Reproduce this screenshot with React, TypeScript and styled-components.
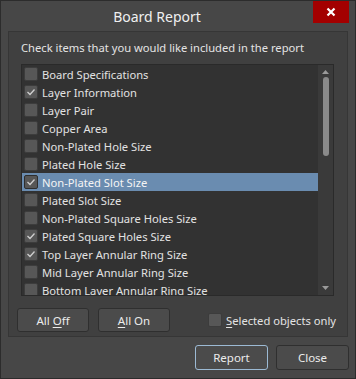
import React from 'react'
import styled, {createGlobalStyle} from 'styled-components'

const GlobalStyle = createGlobalStyle`
  html, body {
    margin: 0;
    padding: 0;
    background: #474747;
  }
  * {
    box-sizing: border-box;
  }
`

const Window = styled.div`
  width: 356px;
  height: 379px;
  display: flex;
  flex-direction: column;
  background: #474747;
  border: 1px solid #2c2c2c;
  font-family: 'Noto Sans', 'Open Sans', sans-serif;
  font-size: 11.2px;
  color: #e4e4e4;
`

const TitleBar = styled.div`
  height: 30px;
  display: flex;
  align-items: flex-start;
`

const Title = styled.div`
  flex: 1;
  text-align: center;
  font-size: 14px;
  line-height: 31px;
  color: #f0f0f0;
`

const CloseX = styled.button`
  width: 36px;
  height: 22px;
  margin-right: 6px;
  border: none;
  padding: 0;
  background: #a30000;
  display: flex;
  align-items: center;
  justify-content: center;
`

const Panel = styled.div`
  margin: 0 7px;
  height: 306px;
  background: #404040;
  border: 1px solid #363636;
  display: flex;
  flex-direction: column;
  padding: 0 13px 0 12px;
`

const Prompt = styled.div`
  height: 32px;
  line-height: 32px;
`

const ListBox = styled.div`
  height: 232px;
  display: flex;
  background: #323232;
  border: 1px solid #2a2a2a;
  overflow: hidden;
`

const Items = styled.div`
  flex: 1;
  overflow: hidden;
`

const Row = styled.div<{$selected?: boolean}>`
  height: 18px;
  display: flex;
  align-items: center;
  gap: 4px;
  padding-left: 2px;
  white-space: nowrap;
  background: ${p => (p.$selected ? '#6a8cb0' : 'transparent')};
  color: ${p => (p.$selected ? '#f4f4f4' : '#e2e2e2')};
`

const Box = styled.span<{$focus?: boolean}>`
  width: 14px;
  height: 14px;
  flex: none;
  border-radius: 2px;
  background: #575757;
  border: 1px solid ${p => (p.$focus ? '#2e2e2e' : '#3c3c3c')};
  display: flex;
  align-items: center;
  justify-content: center;
`

const ScrollTrack = styled.div`
  width: 15px;
  flex: none;
  background: #3a3a3a;
  display: flex;
  flex-direction: column;
  align-items: center;
  padding: 5px 0 5px;
`

const Thumb = styled.div`
  width: 6px;
  height: 79px;
  margin-top: 3px;
  border-radius: 3px;
  background: #8a8a8a;
`

const Spacer = styled.div`
  flex: 1;
`

const Controls = styled.div`
  display: flex;
  align-items: center;
  margin-left: -4px;
  margin-top: 12px;
`

const Button = styled.button<{$focus?: boolean}>`
  width: 73px;
  height: 25px;
  padding: 0;
  border-radius: 3px;
  background: #4b4b4b;
  border: 1px solid ${p => (p.$focus ? '#9cbad4' : '#2f2f2f')};
  color: #ececec;
  font-family: inherit;
  font-size: 11.5px;
`

const SmallButton = styled(Button)`
  width: 72px;
  height: 24px;
  margin-right: 9px;
`

const OptionLabel = styled.label`
  margin-left: auto;
  display: flex;
  align-items: center;
  gap: 4px;
  white-space: nowrap;
  margin-right: -2px;
`

const Footer = styled.div`
  display: flex;
  justify-content: flex-end;
  gap: 8px;
  padding: 8px 6px 0 0;
`

const Key = styled.u`
  text-underline-offset: 2px;
`

const items: {label: string; checked: boolean}[] = [
  {label: 'Board Specifications', checked: false},
  {label: 'Layer Information', checked: true},
  {label: 'Layer Pair', checked: false},
  {label: 'Copper Area', checked: false},
  {label: 'Non-Plated Hole Size', checked: false},
  {label: 'Plated Hole Size', checked: false},
  {label: 'Non-Plated Slot Size', checked: true},
  {label: 'Plated Slot Size', checked: false},
  {label: 'Non-Plated Square Holes Size', checked: false},
  {label: 'Plated Square Holes Size', checked: true},
  {label: 'Top Layer Annular Ring Size', checked: true},
  {label: 'Mid Layer Annular Ring Size', checked: false},
  {label: 'Bottom Layer Annular Ring Size', checked: false},
]

const Check = () => (
  <svg width="10" height="10" viewBox="0 0 10 10">
    <polyline points="1.5,5 4,7.5 8.5,2.5" fill="none" stroke="#d0d0d0" strokeWidth="1.3" />
  </svg>
)

const Triangle = ({down}: {down?: boolean}) => (
  <svg width="7" height="4" viewBox="0 0 7 4">
    <polygon points={down ? '0,0 7,0 3.5,4' : '0,4 7,4 3.5,0'} fill="#9a9a9a" />
  </svg>
)

export default function App() {
  return (
    <>
      <GlobalStyle />
      <Window>
        <TitleBar>
          <Title>Board Report</Title>
          <CloseX aria-label="Close">
            <svg width="10" height="10" viewBox="0 0 10 10">
              <path d="M1.5 1.5 L8.5 8.5 M8.5 1.5 L1.5 8.5" stroke="#fff" strokeWidth="2.2" />
            </svg>
          </CloseX>
        </TitleBar>
        <Panel>
          <Prompt>Check items that you would like included in the report</Prompt>
          <ListBox>
            <Items>
              {items.map((it, i) => (
                <Row key={it.label} $selected={i === 6}>
                  <Box $focus={i === 6}>{it.checked && <Check />}</Box>
                  {it.label}
                </Row>
              ))}
            </Items>
            <ScrollTrack>
              <Triangle />
              <Thumb />
              <Spacer />
              <Triangle down />
            </ScrollTrack>
          </ListBox>
          <Controls>
            <SmallButton>
              All <Key>O</Key>ff
            </SmallButton>
            <SmallButton>
              <Key>A</Key>ll On
            </SmallButton>
            <OptionLabel>
              <Box />
              <span>
                <Key>S</Key>elected objects only
              </span>
            </OptionLabel>
          </Controls>
        </Panel>
        <Footer>
          <Button $focus>Report</Button>
          <Button>Close</Button>
        </Footer>
      </Window>
    </>
  )
}
